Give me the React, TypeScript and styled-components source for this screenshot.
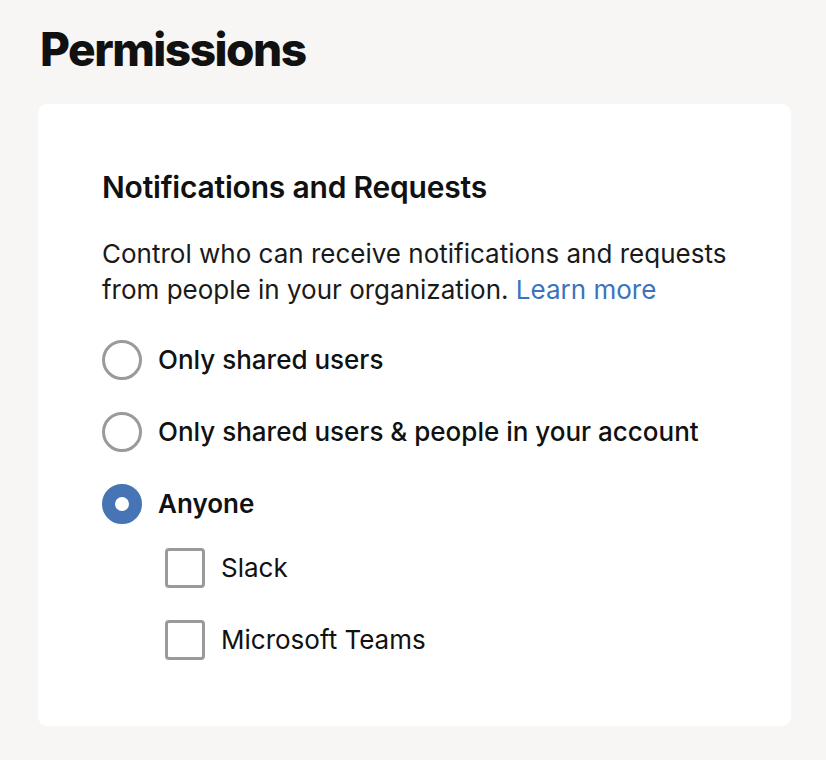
import React, { useState } from "react";
import styled, { createGlobalStyle } from "styled-components";

const GlobalStyle = createGlobalStyle`
  html, body {
    margin: 0;
    padding: 0;
    background: #f7f6f4;
  }
  body {
    font-family: Inter, "Noto Sans", "Liberation Sans", sans-serif;
    color: #111111;
  }
`;

const Page = styled.div`
  padding: 21px 35px 35px 38px;
`;

const Title = styled.h1`
  margin: 0 0 27px 2px;
  font-size: 46px;
  line-height: 56px;
  font-weight: 800;
  letter-spacing: -1.5px;
  color: #111111;
`;

const Card = styled.section`
  background: #ffffff;
  border-radius: 9px;
  padding: 65px 40px 66px 64px;
`;

const Heading = styled.h2`
  margin: 0 0 31px;
  font-size: 30px;
  line-height: 36px;
  font-weight: 600;
  letter-spacing: -0.2px;
`;

const Description = styled.p`
  margin: 0 0 32px;
  max-width: 640px;
  font-size: 26px;
  line-height: 36px;
  font-weight: 400;
  color: #1a1a1a;
`;

const Link = styled.a`
  color: #3b74bd;
  text-decoration: none;
`;

const Group = styled.div<{ $nested?: boolean }>`
  display: flex;
  flex-direction: column;
  gap: 32px;
  margin-top: ${(p) => (p.$nested ? "24px" : "0")};
  padding-left: ${(p) => (p.$nested ? "63px" : "0")};
`;

const Row = styled.label`
  display: flex;
  align-items: center;
  gap: 16px;
  height: 40px;
  cursor: pointer;
`;

const Radio = styled.span<{ $checked: boolean }>`
  box-sizing: border-box;
  width: 40px;
  height: 40px;
  flex: none;
  border-radius: 50%;
  border: ${(p) => (p.$checked ? "13px solid #4674b4" : "3px solid #9a9a9a")};
  background: #ffffff;
`;

const Checkbox = styled.span<{ $checked: boolean }>`
  box-sizing: border-box;
  width: 40px;
  height: 40px;
  flex: none;
  border-radius: 4px;
  border: 3px solid #9a9a9a;
  background: ${(p) => (p.$checked ? "#4674b4" : "#ffffff")};
`;

const RadioText = styled.span<{ $checked: boolean }>`
  font-size: 26px;
  line-height: 32px;
  font-weight: ${(p) => (p.$checked ? 600 : 500)};
`;

const CheckText = styled.span`
  font-size: 26px;
  line-height: 32px;
  font-weight: 400;
`;

const choices = [
  { id: "shared", label: "Only shared users" },
  { id: "account", label: "Only shared users & people in your account" },
  { id: "anyone", label: "Anyone" },
];

const apps = ["Slack", "Microsoft Teams"];

export default function App() {
  const [choice, setChoice] = useState("anyone");
  const [enabled, setEnabled] = useState<Record<string, boolean>>({});

  return (
    <>
      <GlobalStyle />
      <Page>
        <Title>Permissions</Title>
        <Card>
          <Heading>Notifications and Requests</Heading>
          <Description>
            Control who can receive notifications and requests from people in your organization.{" "}
            <Link href="#">Learn more</Link>
          </Description>
          <Group>
            {choices.map((c) => (
              <Row key={c.id} onClick={() => setChoice(c.id)}>
                <Radio $checked={choice === c.id} />
                <RadioText $checked={choice === c.id}>{c.label}</RadioText>
              </Row>
            ))}
          </Group>
          {choice === "anyone" && (
            <Group $nested>
              {apps.map((a) => (
                <Row key={a} onClick={() => setEnabled((s) => ({ ...s, [a]: !s[a] }))}>
                  <Checkbox $checked={!!enabled[a]} />
                  <CheckText>{a}</CheckText>
                </Row>
              ))}
            </Group>
          )}
        </Card>
      </Page>
    </>
  );
}
